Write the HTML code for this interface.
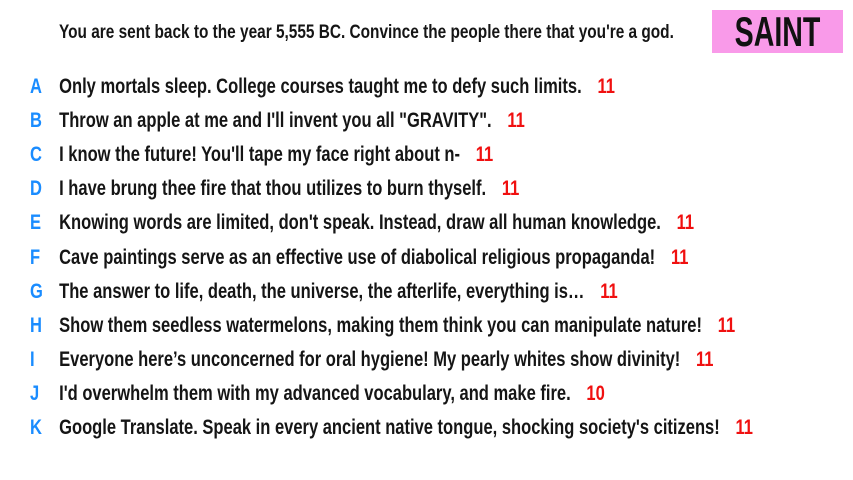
<!DOCTYPE html>
<html><head><meta charset="utf-8"><style>
html,body{margin:0;padding:0;background:#fff;width:853px;height:480px;overflow:hidden;font-family:"Liberation Sans",sans-serif;color:#151515}
.r{position:absolute;left:30px;height:34px;line-height:34px;font-size:21px;font-weight:bold;white-space:nowrap;transform:scaleX(0.787);transform-origin:left center}
.l{display:inline-block;width:37px;color:#1a8cff}
.n{color:#f01010;margin-left:20px}
.h{position:absolute;left:59px;top:20px;line-height:26px;font-size:19px;font-weight:bold;white-space:nowrap;transform:scaleX(0.81);transform-origin:left center}
.box{position:absolute;left:712px;top:10px;width:131px;height:43px;background:#f99ae9}
.box span{position:absolute;left:0;right:0;top:0;line-height:43px;text-align:center;font-size:42px;font-weight:bold;color:#111;transform:scaleX(0.68)}
</style></head><body>
<div class="h">You are sent back to the year 5,555 BC. Convince the people there that you're a god.</div>
<div class="box"><span>SAINT</span></div>
<div class="r" style="top:70px"><span class="l">A</span>Only mortals sleep. College courses taught me to defy such limits.<span class="n">11</span></div>
<div class="r" style="top:104px"><span class="l">B</span>Throw an apple at me and I'll invent you all "GRAVITY".<span class="n">11</span></div>
<div class="r" style="top:138px"><span class="l">C</span>I know the future! You'll tape my face right about n-<span class="n">11</span></div>
<div class="r" style="top:172px"><span class="l">D</span>I have brung thee fire that thou utilizes to burn thyself.<span class="n">11</span></div>
<div class="r" style="top:206px"><span class="l">E</span>Knowing words are limited, don't speak. Instead, draw all human knowledge.<span class="n">11</span></div>
<div class="r" style="top:241px"><span class="l">F</span>Cave paintings serve as an effective use of diabolical religious propaganda!<span class="n">11</span></div>
<div class="r" style="top:275px"><span class="l">G</span>The answer to life, death, the universe, the afterlife, everything is…<span class="n">11</span></div>
<div class="r" style="top:309px"><span class="l">H</span>Show them seedless watermelons, making them think you can manipulate nature!<span class="n">11</span></div>
<div class="r" style="top:343px"><span class="l">I</span>Everyone here’s unconcerned for oral hygiene! My pearly whites show divinity!<span class="n">11</span></div>
<div class="r" style="top:377px"><span class="l">J</span>I'd overwhelm them with my advanced vocabulary, and make fire.<span class="n">10</span></div>
<div class="r" style="top:411px"><span class="l">K</span>Google Translate. Speak in every ancient native tongue, shocking society's citizens!<span class="n">11</span></div>
</body></html>
